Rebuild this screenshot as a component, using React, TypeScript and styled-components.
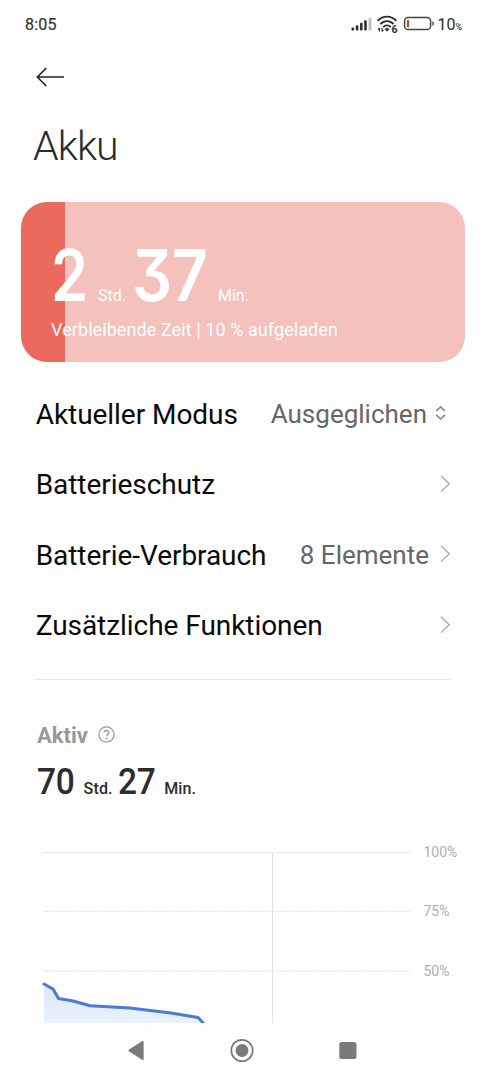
import React from 'react';
import styled, { createGlobalStyle } from 'styled-components';

const GlobalStyle = createGlobalStyle`
  * { box-sizing: border-box; }
  body { margin: 0; background: #fefefe; font-family: Roboto, "Liberation Sans", sans-serif; }
`;

const Screen = styled.div`
  width: 486px;
  height: 1080px;
  overflow: hidden;
  display: flex;
  flex-direction: column;
  background: #fefefe;
`;

const StatusBar = styled.header`
  height: 48px;
  flex: none;
  display: flex;
  align-items: center;
  justify-content: space-between;
  padding: 0 24px 0 25px;
  color: #333;
`;

const Clock = styled.span`
  font-size: 16px;
  letter-spacing: 0.2px;
  font-weight: 400;
  -webkit-text-stroke: 0.2px #333;
`;

const StatusIcons = styled.div`
  display: flex;
  align-items: center;
  gap: 4px;
  svg { display: block; }
`;

const Charge = styled.span`
  font-size: 16px;
  letter-spacing: 0.2px;
  margin-left: -2px;
  -webkit-text-stroke: 0.1px #333;
  small { font-size: 8.5px; letter-spacing: 0; }
`;

const BackButton = styled.button`
  display: block;
  flex: none;
  width: 28px;
  height: 20px;
  margin: 19px 0 0 36px;
  padding: 0;
  border: 0;
  background: none;
  svg { display: block; }
`;

const Title = styled.h1`
  flex: none;
  margin: 35px 0 0 33px;
  font-size: 41px;
  line-height: 48px;
  font-weight: 300;
  letter-spacing: -0.9px;
  color: #2b2b2b;
`;

const BatteryCard = styled.section<{ $level: number }>`
  flex: none;
  height: 160px;
  margin: 32px 21px 0;
  padding: 37px 30px 0;
  border-radius: 26px;
  color: #fff;
  background: linear-gradient(to right, #eb6a5d ${p => p.$level}%, #f4c1bd ${p => p.$level}%);
`;

const CardTime = styled.div`
  display: flex;
  align-items: baseline;
  height: 72px;
  line-height: 72px;
`;

const BigNumber = styled.span<{ $width: number; $stretch: number }>`
  display: block;
  width: ${p => p.$width}px;
  font-family: Inter, Roboto, sans-serif;
  font-feature-settings: "cv09";
  font-size: 71px;
  font-weight: 600;
  white-space: nowrap;
  transform: scaleX(${p => p.$stretch});
  transform-origin: 0 50%;
  letter-spacing: -0.5px;
`;

const CardUnit = styled.span<{ $gap?: number }>`
  font-size: 16px;
  margin-right: ${p => p.$gap ?? 0}px;
`;

const CardCaption = styled.div`
  margin-top: 8px;
  font-size: 18px;
  line-height: 22px;
  letter-spacing: 0.08px;
  white-space: nowrap;
`;

const Settings = styled.ul`
  flex: none;
  list-style: none;
  margin: 17px 35px 0 35px;
  padding: 0 0 18px;
  border-bottom: 1px solid #e6e6e6;
`;

const SettingRow = styled.li`
  height: 70.5px;
  display: flex;
  align-items: center;
  justify-content: space-between;
  white-space: nowrap;
`;

const SettingLabel = styled.span`
  margin-left: 0.7px;
  font-size: 28px;
  letter-spacing: -0.05px;
  color: #0a0a0a;
`;

const SettingValue = styled.span`
  display: flex;
  align-items: center;
  font-size: 26px;
  color: #666;
  svg { display: block; }
`;

const Active = styled.section`
  flex: none;
  padding: 42px 37px 0;
`;

const ActiveHeading = styled.h2`
  display: flex;
  align-items: center;
  gap: 10px;
  margin: 0;
  height: 28px;
  font-size: 22px;
  line-height: 28px;
  font-weight: 700;
  color: #999;
  svg { display: block; }
`;

const ActiveTime = styled.div`
  display: flex;
  align-items: baseline;
  margin-top: 10px;
  height: 44px;
  line-height: 44px;
  color: #2d2d2d;
`;

const ActiveNumber = styled.span<{ $width: number }>`
  display: block;
  width: ${p => p.$width}px;
  font-size: 36px;
  font-weight: 500;
  letter-spacing: -0.2px;
  transform: scaleX(0.93);
  transform-origin: 0 50%;
`;

const ActiveUnit = styled.span<{ $width?: number }>`
  width: ${p => (p.$width ? `${p.$width}px` : 'auto')};
  font-size: 16px;
  font-weight: 500;
  letter-spacing: 0.15px;
`;

const ChartArea = styled.section`
  flex: none;
  display: flex;
  height: 183px;
  margin-top: 36px;
  padding-left: 40px;
  overflow: hidden;
`;

const ChartLabels = styled.div`
  display: flex;
  flex-direction: column;
  margin-left: 8.5px;
  font-size: 14px;
  color: #aeaeae;
  span { height: 59.3px; line-height: 24px; }
`;

const NavBar = styled.nav`
  flex: none;
  height: 57px;
  display: flex;
  align-items: center;
  svg { display: block; }
`;

const Signal = () => (
  <svg width="22" height="16" viewBox="0 0 22 16">
    <g fill="#2d2d2d">
      <rect x="0.5" y="11.5" width="2.6" height="3" rx="1" />
      <rect x="4.8" y="9.2" width="2.6" height="5.3" rx="1" />
      <rect x="9" y="6.8" width="2.6" height="7.7" rx="1" />
      <rect x="13.2" y="4.2" width="2.6" height="10.3" rx="1" />
    </g>
    <rect x="17.6" y="1.8" width="2.8" height="12.7" rx="1" fill="#bdbdbd" />
  </svg>
);

const Wifi = () => (
  <svg width="22" height="28" viewBox="0 -4 22 28">
    <g fill="none" stroke="#2d2d2d" strokeWidth="1.9">
      <path d="M0.6 6.9C5.9 1.2 14.1 1.2 19.4 6.9" />
      <path d="M3.4 10.1C7.2 6.1 12.8 6.1 16.6 10.1" />
      <path d="M6.2 13.1C8.4 10.8 11.6 10.8 13.8 13.1" />
    </g>
    <path d="M7.6 14.9Q10 13.3 12.4 14.9L10 17.6Z" fill="#2d2d2d" />
    <path d="M2.5 17.6v-3.4M1 15.6l1.5-1.7M5 13.9v3.4M6.4 15.8 5 17.5" stroke="#2d2d2d" strokeWidth="1.1" fill="none" />
    <text x="14.4" y="19" fontFamily="Roboto, sans-serif" fontSize="10.5" fontWeight="700" fill="#2d2d2d" stroke="#fefefe" strokeWidth="1.2" paintOrder="stroke">6</text>
  </svg>
);

const Battery = () => (
  <svg width="32" height="16" viewBox="0 0 32 16">
    <rect x="1.6" y="1.5" width="26" height="12" rx="3.6" fill="none" stroke="#444" strokeWidth="1.5" />
    <rect x="4" y="3.8" width="2" height="7.5" rx="0.6" fill="#d9352b" />
    <path d="M29.3 5.4h.5q1 .4 1 1.2v1.8q0 .8-1 1.2h-.5z" fill="#444" />
  </svg>
);

const Chevron = () => (
  <svg width="22" height="20" viewBox="0 0 22 20">
    <path d="M12 0.8 20.2 8.7 12 16.6" fill="none" stroke="#a8a8a8" strokeWidth="1.3" />
  </svg>
);

const UpDown = () => (
  <svg width="24" height="20" viewBox="0 0 24 20">
    <path d="M9.2 7 13.6 2.8 18 7M9.2 10.8 13.6 15 18 10.8" fill="none" stroke="#85859a" strokeWidth="1.6" />
  </svg>
);

const Help = () => (
  <svg width="17" height="20" viewBox="0 0 17 20">
    <g fill="none" stroke="#999" strokeWidth="1.3">
      <circle cx="8.5" cy="8.5" r="7.6" />
      <path d="M6.1 6.6C6.1 3.7 10.9 3.7 10.9 6.6C10.9 8.3 8.5 8.2 8.5 10.2" strokeWidth="1.4" />
    </g>
    <circle cx="8.5" cy="12.5" r="0.9" fill="#999" />
  </svg>
);

const LINE = 'M4 144 13 149 18.5 158.5 33 161 50 165.7 90 168 131 173 158 177.5 165 185';

const Chart = () => (
  <svg width="375" height="183" viewBox="0 0 375 183">
    <defs>
      <linearGradient id="usage" x1="0" y1="144" x2="0" y2="184" gradientUnits="userSpaceOnUse">
        <stop offset="0" stopColor="#dce8fa" />
        <stop offset="0.5" stopColor="#e3ecfb" />
        <stop offset="1" stopColor="#ebf2fd" />
      </linearGradient>
    </defs>
    <g stroke="#d6d6d6" strokeWidth="1" strokeDasharray="1.2 1.2">
      <path d="M4 12.5H370" />
      <path d="M4 71.7H370" />
      <path d="M4 131H370" />
    </g>
    <path d="M232.5 12V183" stroke="#e2e2e2" />
    <path d={`${LINE}V190H4Z`} fill="url(#usage)" />
    <path d={LINE} fill="none" stroke="#4a7bd8" strokeWidth="3.1" strokeLinejoin="round" strokeLinecap="round" />
  </svg>
);

const NavIcons = () => (
  <svg width="486" height="57" viewBox="0 0 486 57">
    <path d="M129 26.6 142.4 18.1Q143.6 17.5 143.6 18.8V36.2Q143.6 37.5 142.4 36.9L129 28.2Q127.8 27.4 129 26.6Z" fill="#7a7a7a" />
    <circle cx="242" cy="27.5" r="10.7" fill="none" stroke="#7a7a7a" strokeWidth="1.7" />
    <circle cx="242" cy="27.5" r="6.5" fill="#7a7a7a" />
    <rect x="339.3" y="19" width="17.2" height="17" rx="2.6" fill="#7a7a7a" />
  </svg>
);

const settings = [
  { label: 'Aktueller Modus', value: 'Ausgeglichen', select: true },
  { label: 'Batterieschutz' },
  { label: 'Batterie-Verbrauch', value: '8 Elemente' },
  { label: 'Zusätzliche Funktionen' },
];

export default function App() {
  return (
    <>
      <GlobalStyle />
      <Screen>
        <StatusBar>
          <Clock>8:05</Clock>
          <StatusIcons>
            <Signal />
            <Wifi />
            <Battery />
            <Charge>10<small>%</small></Charge>
          </StatusIcons>
        </StatusBar>
        <BackButton aria-label="Zurück">
          <svg width="28" height="20" viewBox="0 0 28 20">
            <path d="M10.3 1 1.3 10 10.3 19M1.3 10H28" fill="none" stroke="#222" strokeWidth="1.6" />
          </svg>
        </BackButton>
        <Title>Akku</Title>
        <BatteryCard $level={10}>
          <CardTime>
            <BigNumber $width={47} $stretch={0.84}>2</BigNumber>
            <CardUnit $gap={6}>Std.</CardUnit>
            <BigNumber $width={86} $stretch={0.885}>37</BigNumber>
            <CardUnit>Min.</CardUnit>
          </CardTime>
          <CardCaption>Verbleibende Zeit | 10 % aufgeladen</CardCaption>
        </BatteryCard>
        <Settings>
          {settings.map(item => (
            <SettingRow key={item.label}>
              <SettingLabel>{item.label}</SettingLabel>
              <SettingValue>
                {item.value}
                {item.select ? <UpDown /> : <Chevron />}
              </SettingValue>
            </SettingRow>
          ))}
        </Settings>
        <Active>
          <ActiveHeading>Aktiv <Help /></ActiveHeading>
          <ActiveTime>
            <ActiveNumber $width={46.6}>70</ActiveNumber>
            <ActiveUnit $width={34.6}>Std.</ActiveUnit>
            <ActiveNumber $width={46}>27</ActiveNumber>
            <ActiveUnit>Min.</ActiveUnit>
          </ActiveTime>
        </Active>
        <ChartArea>
          <Chart />
          <ChartLabels>
            <span>100%</span>
            <span>75%</span>
            <span>50%</span>
          </ChartLabels>
        </ChartArea>
        <NavBar>
          <NavIcons />
        </NavBar>
      </Screen>
    </>
  );
}
